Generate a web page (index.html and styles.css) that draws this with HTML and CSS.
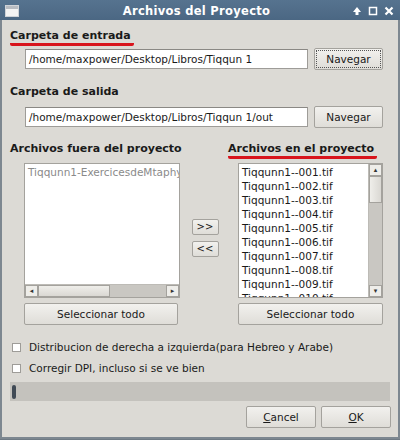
FILE: index.html
```html
<!DOCTYPE html>
<html lang="es">
<head>
  <meta charset="UTF-8" />
  <title>Archivos del Proyecto</title>
  <link rel="stylesheet" href="styles.css">
</head>
<body>
  <div class="window">
    <div class="titlebar">
      <span class="win-icon"></span>
      <span class="title">Archivos del Proyecto</span>
      <span class="win-controls">
        <svg width="10" height="10" viewBox="0 0 10 10"><path d="M5 1 L9 6 H6.5 V9 H3.5 V6 H1 Z" fill="#fff"/></svg>
        <svg width="10" height="10" viewBox="0 0 10 10"><rect x="1.5" y="1.5" width="7" height="7" fill="none" stroke="#fff" stroke-width="1.5"/></svg>
        <svg width="10" height="10" viewBox="0 0 10 10"><path d="M1.5 1.5 L8.5 8.5 M8.5 1.5 L1.5 8.5" stroke="#fff" stroke-width="2.2"/></svg>
      </span>
    </div>

    <div class="content">
      <div class="section-label first"><span class="marked">Carpeta de entrada</span></div>
      <div class="path-row">
        <div class="text-input">/home/maxpower/Desktop/Libros/Tiqqun 1</div>
        <button class="btn focused">Navegar</button>
      </div>

      <div class="section-label">Carpeta de salida</div>
      <div class="path-row">
        <div class="text-input">/home/maxpower/Desktop/Libros/Tiqqun 1/out</div>
        <button class="btn">Navegar</button>
      </div>

      <div class="lists">
        <div class="list-col left">
          <div class="section-label">Archivos fuera del proyecto</div>
          <div class="listbox">
            <div class="list-items faded">
              <div>Tiqqunn1-ExercicesdeMtaphysique.pdf</div>
            </div>
            <div class="hscroll">
              <span class="arrow">&#9666;</span>
              <span class="hthumb"></span>
              <span class="trough"></span>
              <span class="arrow">&#9656;</span>
            </div>
          </div>
          <button class="btn wide">Seleccionar todo</button>
        </div>

        <div class="move-buttons">
          <button class="btn small">&gt;&gt;</button>
          <button class="btn small">&lt;&lt;</button>
        </div>

        <div class="list-col right">
          <div class="section-label"><span class="marked">Archivos en el proyecto</span></div>
          <div class="listbox vertical">
            <div class="list-items">
              <div>Tiqqunn1--001.tif</div>
              <div>Tiqqunn1--002.tif</div>
              <div>Tiqqunn1--003.tif</div>
              <div>Tiqqunn1--004.tif</div>
              <div>Tiqqunn1--005.tif</div>
              <div>Tiqqunn1--006.tif</div>
              <div>Tiqqunn1--007.tif</div>
              <div>Tiqqunn1--008.tif</div>
              <div>Tiqqunn1--009.tif</div>
              <div>Tiqqunn1--010.tif</div>
            </div>
            <div class="vscroll">
              <span class="arrow">&#9652;</span>
              <span class="vthumb"></span>
              <span class="trough"></span>
              <span class="arrow">&#9662;</span>
            </div>
          </div>
          <button class="btn wide">Seleccionar todo</button>
        </div>
      </div>

      <label class="check first"><span class="box"></span>Distribucion de derecha a izquierda(para Hebreo y Arabe)</label>
      <label class="check"><span class="box"></span>Corregir DPI, incluso si se ve bien</label>

      <div class="progress"><span class="progress-handle"></span></div>

      <div class="dialog-buttons">
        <button class="btn dlg"><u>C</u>ancel</button>
        <button class="btn dlg"><u>O</u>K</button>
      </div>
    </div>
  </div>
</body>
</html>
```

FILE: styles.css
```css
body {
  margin: 0;
  font-family: "DejaVu Sans", sans-serif;
  font-size: 10.5px;
  color: #1a1a1a;
  background: #6f7a84;
}
.window {
  width: 396px;
  height: 437px;
  border: 2px solid #7d8790;
  border-top: none;
  background: #dcdad5;
  display: flex;
  flex-direction: column;
}
.titlebar {
  height: 19px;
  flex: none;
  margin: 0 -2px;
  background: linear-gradient(#56738f, #4b6783);
  display: flex;
  align-items: center;
  padding: 1px 6px 0 5px;
  color: #fff;
}
.win-icon {
  width: 12px;
  height: 10px;
  background: linear-gradient(#b8bcc2 0 3px, #f4f4f4 3px);
  border: 1px solid #cfd3d8;
}
.title {
  flex: 1;
  text-align: center;
  font-weight: bold;
  font-size: 11.5px;
  letter-spacing: 0.3px;
  padding-left: 22px;
}
.win-controls {
  display: flex;
  gap: 6px;
  align-items: center;
}
.content {
  padding: 0 6px 0 8px;
  display: flex;
  flex-direction: column;
}
.section-label {
  font-weight: bold;
  font-size: 11px;
  line-height: 16px;
  height: 16px;
  margin-top: 13px;
  white-space: nowrap;
}
.section-label.first {
  margin-top: 8px;
}
.marked {
  display: inline-block;
  border-bottom: 3px solid #d8141c;
  border-radius: 2px;
  line-height: 14px;
  padding-right: 3px;
}
.path-row {
  display: flex;
  align-items: center;
  margin: 4px 0 0 15px;
  gap: 6px;
}
.text-input {
  width: 278px;
  height: 18px;
  line-height: 18px;
  padding-left: 3px;
  background: #fff;
  border: 1px solid #9e9c98;
  border-top-color: #8a8884;
  white-space: nowrap;
  overflow: hidden;
}
.btn {
  font-family: inherit;
  font-size: 10.5px;
  color: #1a1a1a;
  background: linear-gradient(#f2f1ee, #dfddd8);
  border: 1px solid #a4a29d;
  border-radius: 2px;
  padding: 0;
  height: 22px;
}
.path-row .btn {
  width: 69px;
}
.path-row + .section-label {
  margin-top: 14px;
}
.path-row ~ .path-row {
  margin-top: 6px;
}
.btn.focused {
  outline: 1px dotted #555;
  outline-offset: -3px;
}
.lists {
  display: grid;
  grid-template-columns: 168px 60px 145px;
}
.list-col {
  display: flex;
  flex-direction: column;
  min-width: 0;
}
.list-col.left .listbox,
.list-col.left .btn {
  margin-left: 14px;
  width: 154px;
}
.list-col.right .section-label {
  margin-left: -10px;
}
.listbox {
  margin-top: 6px;
  height: 133px;
  background: #fff;
  border: 1px solid #a4a29d;
  display: flex;
  flex-direction: column;
  overflow: hidden;
}
.listbox.vertical {
  flex-direction: row;
}
.list-items {
  flex: 1;
  padding: 1px 3px;
  overflow: hidden;
  white-space: nowrap;
  line-height: 14px;
  font-size: 10.5px;
}
.list-items.faded {
  color: #8a8a8a;
}
.hscroll {
  height: 12px;
  flex: none;
  display: flex;
  background: #c9c7c2;
  border-top: 1px solid #bdbbb6;
}
.vscroll {
  width: 13px;
  flex: none;
  display: flex;
  flex-direction: column;
  background: #c9c7c2;
  border-left: 1px solid #bdbbb6;
}
.arrow {
  width: 11px;
  height: 10px;
  background: #eeede9;
  border: 1px solid #a4a29d;
  font-size: 7px;
  line-height: 10px;
  text-align: center;
  color: #333;
  flex: none;
}
.hthumb {
  width: 70px;
  background: linear-gradient(#efeeea, #dad8d3);
  border: 1px solid #a4a29d;
}
.vthumb {
  height: 25px;
  background: linear-gradient(90deg, #efeeea, #dad8d3);
  border: 1px solid #a4a29d;
}
.trough {
  flex: 1;
}
.btn.wide {
  margin-top: 5px;
  width: 145px;
}
.move-buttons {
  display: flex;
  flex-direction: column;
  align-items: center;
  justify-content: center;
  gap: 6px;
  padding-top: 22px;
  padding-right: 6px;
}
.btn.small {
  width: 27px;
  height: 16px;
  font-size: 10px;
  line-height: 12px;
}
.check {
  display: flex;
  align-items: center;
  margin-left: 2px;
  height: 16px;
  margin-top: 5px;
}
.check.first {
  margin-top: 14px;
}
.box {
  width: 7px;
  height: 7px;
  background: #fff;
  border: 1px solid #9e9c98;
  margin-right: 8px;
}
.progress {
  margin-top: 6px;
  height: 19px;
  width: 378px;
  background: #c4c2bd;
  display: flex;
  align-items: center;
  padding-left: 2px;
}
.progress-handle {
  width: 4px;
  height: 14px;
  background: #404a55;
  border-radius: 2px;
}
.dialog-buttons {
  display: flex;
  justify-content: flex-end;
  gap: 5px;
  margin-top: 5px;
  padding-right: 1px;
}
.btn.dlg {
  width: 70px;
  height: 22px;
}
```
